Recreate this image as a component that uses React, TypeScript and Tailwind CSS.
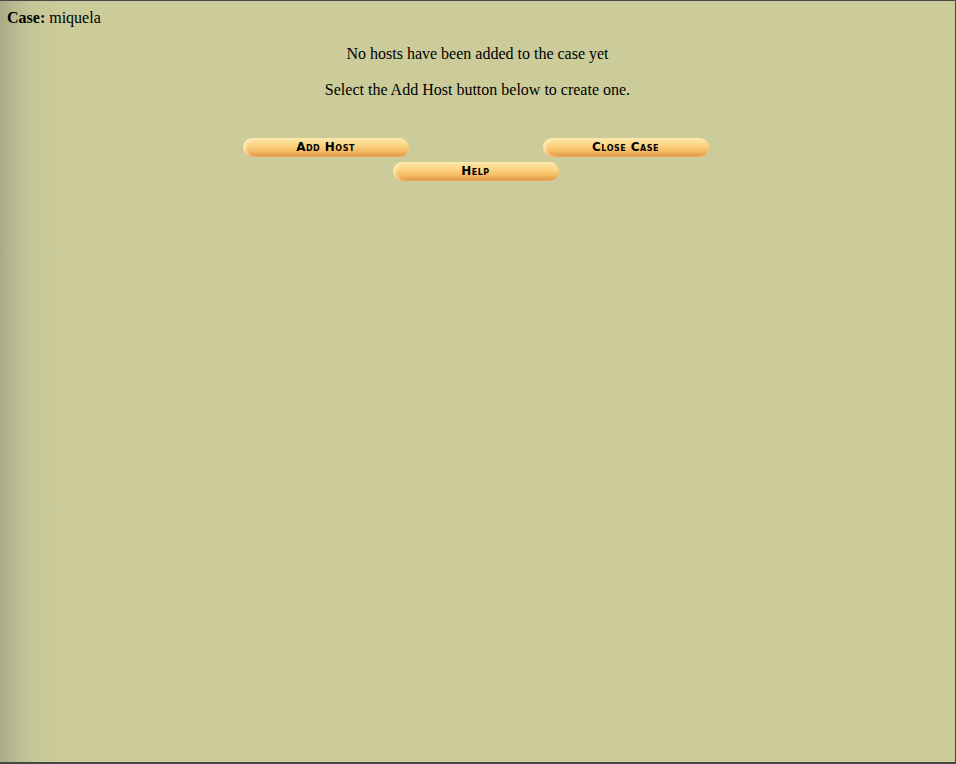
export default function App() {
  const btn =
    'block w-[166px] h-[19px] rounded-full border-0 bg-[linear-gradient(180deg,#fde7a8_0%,#fcd582_40%,#f5b862_72%,#e18f38_100%)] shadow-[inset_3px_0_3px_rgba(255,245,210,0.6)] text-[12px] leading-[19px] font-bold text-black [font-variant:small-caps] tracking-[0.04em] [font-family:"DejaVu_Sans",sans-serif] cursor-pointer';

  return (
    <div className="h-[764px] w-full border-t border-r border-b-2 border-[#474747] bg-[linear-gradient(90deg,#a8aa87_0px,#b9ba90_14px,#c6c797_34px,#cccc9a_60px,#cccc9a_100%)] text-black [font-family:'Liberation_Serif',serif] text-base">
      <div className="pt-[8px] pl-[7px] leading-[18px]">
        <b>Case:</b> miquela
      </div>
      <p className="mt-[18px] text-center leading-[18px]">
        No hosts have been added to the case yet
      </p>
      <p className="mt-[18px] text-center leading-[18px]">
        Select the Add Host button below to create one.
      </p>
      <div className="flex justify-center pr-[4px] mt-[39px]">
        <div className="w-[600px] grid grid-cols-2 gap-y-[5px]">
          <div className="flex justify-center">
            <button className={btn}>Add Host</button>
          </div>
          <div className="flex justify-center">
            <button className={btn}>Close Case</button>
          </div>
          <div className="col-span-2 flex justify-center">
            <button className={btn}>Help</button>
          </div>
        </div>
      </div>
    </div>
  );
}
